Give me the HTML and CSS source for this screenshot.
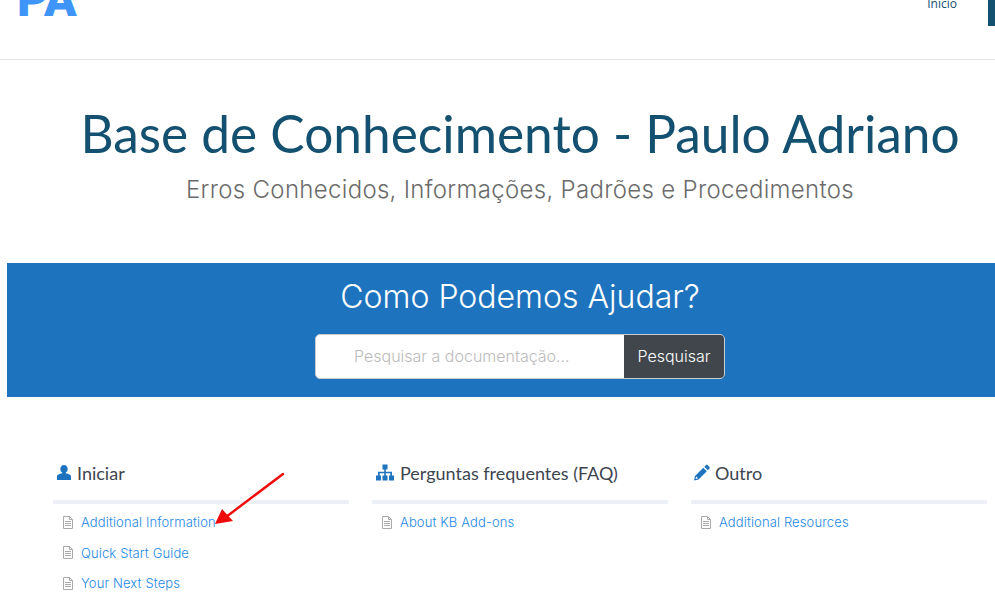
FILE: index.html
```html
<!DOCTYPE html>
<html lang="pt">
<head>
<meta charset="utf-8">
<title>Base de Conhecimento - Paulo Adriano</title>
<link rel="stylesheet" href="styles.css">
</head>
<body>
<div class="page">
  <header class="topbar">
    <a class="logo">PA</a>
    <nav class="nav">
      <a class="nav-link">Início</a>
      <span class="nav-mark"></span>
    </nav>
  </header>
  <section class="hero">
    <h1 class="title">Base de Conhecimento - Paulo Adriano</h1>
    <p class="subtitle">Erros Conhecidos, Informações, Padrões e Procedimentos</p>
  </section>
  <section class="search-band">
    <h2 class="search-title">Como Podemos Ajudar?</h2>
    <form class="search-form">
      <div class="search-input">Pesquisar a documentação...</div>
      <div class="search-button">Pesquisar</div>
    </form>
  </section>
  <section class="columns">
    <div class="column">
      <h3 class="col-title">
        <svg class="col-icon" viewBox="0 0 16 16"><path d="M8 0.5c2.2 0 3.7 1.8 3.7 4 0 1.6-.8 3-1.9 3.6v.7c2.5.6 5.2 1.3 5.2 3.4V15c0 .4-.3.6-.6.6H1.6C1.300 15.600 1 15.400 1 15v-2.800c0-2.100 2.700-2.800 5.200-3.400v-.7C5.100 7.500 4.300 6.100 4.300 4.500c0-2.200 1.500-4 3.700-4z"/></svg>
        Iniciar
      </h3>
      <ul class="doc-list">
        <li class="doc-item"><svg class="doc-icon" viewBox="0 0 10 13"><path d="M.5.5h6l3 3v9h-9zM6.500.5v3h3M2 5.500h6M2 7.500h6M2 9.500h6"/></svg><a class="doc-link">Additional Information</a></li>
        <li class="doc-item"><svg class="doc-icon" viewBox="0 0 10 13"><path d="M.5.5h6l3 3v9h-9zM6.500.5v3h3M2 5.500h6M2 7.500h6M2 9.500h6"/></svg><a class="doc-link">Quick Start Guide</a></li>
        <li class="doc-item"><svg class="doc-icon" viewBox="0 0 10 13"><path d="M.5.5h6l3 3v9h-9zM6.500.5v3h3M2 5.500h6M2 7.500h6M2 9.500h6"/></svg><a class="doc-link">Your Next Steps</a></li>
      </ul>
    </div>
    <div class="column">
      <h3 class="col-title">
        <svg class="col-icon col-icon-wide" viewBox="0 0 20 16"><path d="M7.500 0h5v5h-1.700v2.200h6.200V11H19v5h-5v-5h1.300V8.800h-4.500V11H12.500v5h-5v-5h1.700V8.800H4.700V11H6v5H1v-5h2V7.200h6.200V5H7.500z"/></svg>
        Perguntas frequentes (FAQ)
      </h3>
      <ul class="doc-list">
        <li class="doc-item"><svg class="doc-icon" viewBox="0 0 10 13"><path d="M.5.5h6l3 3v9h-9zM6.500.5v3h3M2 5.500h6M2 7.500h6M2 9.500h6"/></svg><a class="doc-link">About KB Add-ons</a></li>
      </ul>
    </div>
    <div class="column">
      <h3 class="col-title">
        <svg class="col-icon" viewBox="0 0 16 16"><path d="M12 .6c.5-.4 1.100-.4 1.500 0l2 2c.4.4.4 1 0 1.400l-1.700 1.700-3.500-3.500zM9.300 3.200l3.500 3.500-8.300 8.300L0 16l1-4.500zM2.200 12l-.7 2.500 2.500-.7z"/></svg>
        Outro
      </h3>
      <ul class="doc-list">
        <li class="doc-item"><svg class="doc-icon" viewBox="0 0 10 13"><path d="M.5.5h6l3 3v9h-9zM6.500.5v3h3M2 5.500h6M2 7.500h6M2 9.500h6"/></svg><a class="doc-link">Additional Resources</a></li>
      </ul>
    </div>
  </section>
  <svg class="arrow" viewBox="0 0 80 60"><path d="M71 3 L14 46" fill="none" stroke="#f00a0a" stroke-width="2.400" stroke-linecap="round"/><path d="M3 53 L10 38 L21 50 Z" fill="#f00a0a"/></svg>
</div>
</body>
</html>
```
FILE: styles.css
```css
html, body {
  margin: 0;
  padding: 0;
  background: #fff;
  overflow: hidden;
}
.page {
  position: relative;
  width: 995px;
  height: 606px;
  overflow: hidden;
  font-family: "Inter", "Liberation Sans", sans-serif;
}
.topbar {
  display: flex;
  justify-content: space-between;
  align-items: flex-start;
  height: 59px;
  border-bottom: 1px solid #e2e2e2;
  overflow: hidden;
}
.logo {
  margin: -24px 0 0 17px;
  font: 900 48px/48px "Roboto", sans-serif;
  color: #3f94f7;
}
.nav {
  display: flex;
  align-items: flex-start;
}
.nav-link {
  margin-top: -4px;
  margin-right: 31px;
  font: 12px/16px "Open Sans", sans-serif;
  color: #14506f;
}
.nav-mark {
  width: 7px;
  height: 26px;
  background: #14506f;
}
.hero {
  width: 1040px;
  text-align: center;
}
.title {
  margin: 41px 0 0;
  font: 400 51.400px/64px "Lato", sans-serif;
  color: #14506f;
}
.subtitle {
  margin: 9px 0 0;
  font: 300 24px/32px "Inter", sans-serif;
  letter-spacing: .31px;
  color: #6b6b6b;
}
.search-band {
  box-sizing: border-box;
  width: 1026px;
  height: 134px;
  margin: 57px 0 0 7px;
  padding-top: 16px;
  background: #1e73be;
  text-align: center;
}
.search-title {
  margin: 0;
  font: 300 32px/36px "Inter", sans-serif;
  color: #fff;
}
.search-form {
  display: flex;
  width: 410px;
  height: 45px;
  margin: 19px auto 0;
  box-sizing: border-box;
  border: 1px solid #ccc;
  border-radius: 5px;
  overflow: hidden;
  background: #fff;
}
.search-input {
  flex: 1;
  padding-left: 38px;
  font: 300 16px/42px "Inter", sans-serif;
  color: #bbb;
  text-align: left;
}
.search-button {
  width: 100px;
  background: #41464d;
  color: #fff;
  font: 300 16px/42px "Inter", sans-serif;
}
.columns {
  display: grid;
  grid-template-columns: repeat(3, 296px);
  column-gap: 23px;
  margin: 0 0 0 53px;
}
.col-title {
  display: flex;
  align-items: center;
  gap: 5px;
  box-sizing: border-box;
  height: 107px;
  margin: 0;
  padding: 49px 0 1px 3px;
  border-bottom: 4px solid #edf1f5;
  font: 400 18px/24px "Lato", sans-serif;
  color: #3d4550;
}
.col-icon {
  width: 16px;
  height: 17px;
  fill: #1e73be;
}
.col-icon-wide {
  width: 20px;
}
.doc-list {
  margin: 0;
  padding: 3px 0 0 10px;
  list-style: none;
}
.doc-item {
  display: flex;
  align-items: center;
  gap: 8px;
  height: 30.500px;
}
.doc-icon {
  width: 10px;
  height: 13px;
  fill: none;
  stroke: #aaa;
  stroke-width: 1;
}
.doc-link {
  font: 300 13px/18px "Inter", sans-serif;
  letter-spacing: .13px;
  color: #1e88e5;
}
.arrow {
  position: absolute;
  left: 212px;
  top: 471px;
  width: 80px;
  height: 60px;
}
```
